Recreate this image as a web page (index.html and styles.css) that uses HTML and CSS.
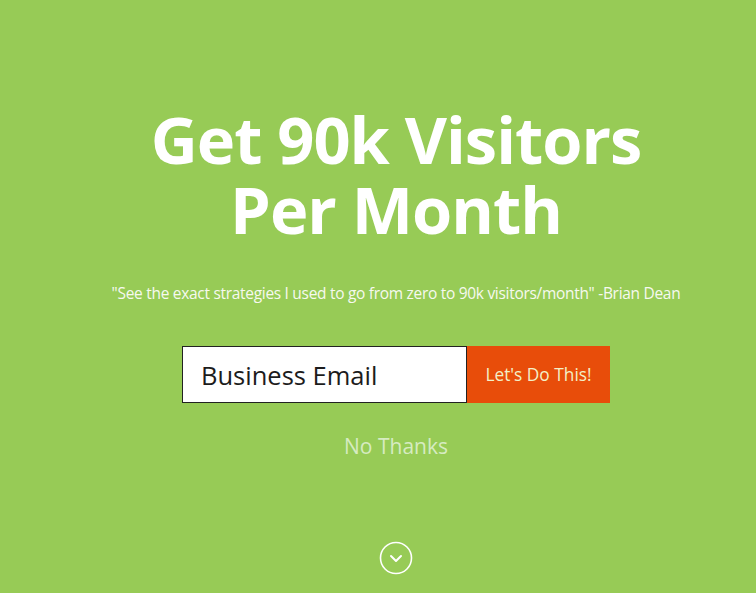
FILE: index.html
```html
<!DOCTYPE html>
<html>
<head>
<meta charset="utf-8">
<link rel="stylesheet" href="styles.css">
</head>
<body>
<main class="hero">
  <h1 class="title">Get 90k Visitors<br>Per Month</h1>
  <p class="quote">"See the exact strategies I used to go from zero to 90k visitors/month" -Brian Dean</p>
  <form class="optin">
    <input class="email" type="text" placeholder="Business Email">
    <button class="cta" type="button">Let's Do This!</button>
  </form>
  <a class="nothanks">No Thanks</a>
  <div class="down">
    <svg width="34" height="34" viewBox="0 0 34 34"><circle cx="17" cy="17" r="15.5" fill="none" stroke="#fff" stroke-width="1.6"/><path d="M12 15l5 5 5-5" fill="none" stroke="#fff" stroke-width="2" stroke-linecap="round" stroke-linejoin="round"/></svg>
  </div>
</main>
</body>
</html>
```
FILE: styles.css
```css
html, body { margin: 0; padding: 0; }
body {
  background: #97cb56;
  font-family: "Open Sans", "Liberation Sans", sans-serif;
  width: 756px;
  height: 593px;
  overflow: hidden;
}
.hero {
  display: flex;
  flex-direction: column;
  align-items: center;
  padding-left: 36px;
}
.title {
  margin: 104px 0 0;
  color: #fff;
  font-weight: 700;
  font-size: 65px;
  line-height: 70px;
  text-align: center;
  letter-spacing: -1px;
}
.quote {
  margin: 38px 0 0;
  color: #f6f9ef;
  font-size: 15.5px;
  letter-spacing: -0.3px;
}
.optin {
  display: flex;
  margin-top: 42px;
}
.email {
  box-sizing: border-box;
  width: 285px;
  height: 57px;
  border: 1px solid #222;
  background: #fff;
  padding: 0 18px;
  font-family: inherit;
  font-size: 25.5px;
  outline: none;
}
.email::placeholder { color: #1c1c1c; }
.cta {
  width: 143px;
  height: 57px;
  border: 0;
  background: #e84d0a;
  color: #f3f0c8;
  font-family: inherit;
  font-size: 17.3px;
  padding: 0;
}
.nothanks {
  margin-top: 29px;
  color: #d6ebc1;
  font-size: 21px;
}
.down {
  margin-top: 81px;
  display: flex;
}
```
